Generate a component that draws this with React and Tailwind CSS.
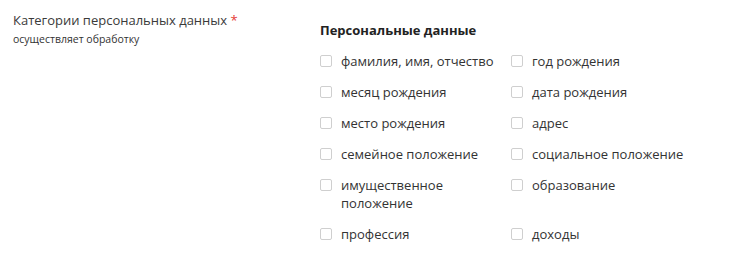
import React from "react";

const col1 = ["фамилия, имя, отчество", "месяц рождения", "место рождения", "семейное положение", "имущественное положение", "профессия"];
const col2 = ["год рождения", "дата рождения", "адрес", "социальное положение", "образование", "доходы"];

function Item({ label }) {
  return (
    <label className="flex items-start gap-[9px]">
      <span className="mt-[3px] h-[12px] w-[12px] shrink-0 rounded-[2px] border border-[#cfcfcf] bg-white"></span>
      <span className="leading-[18px]">{label}</span>
    </label>
  );
}

export default function App() {
  const items = [];
  for (let i = 0; i < col1.length; i++) {
    items.push(<Item key={"a" + i} label={col1[i]} />);
    items.push(<Item key={"b" + i} label={col2[i]} />);
  }
  return (
    <div className="h-[257px] w-[750px] bg-white text-[#333333]" style={{ fontFamily: '"Open Sans", sans-serif' }}>
      <div className="flex pt-[11px]">
        <div className="w-[320px] pl-[13px]">
          <div className="text-[13px] leading-[18px] text-[#3a3a3a]">
            Категории персональных данных <span className="text-[#e53935]">*</span>
          </div>
          <div className="mt-[3px] text-[10.5px] leading-[14px] text-[#333]">осуществляет обработку</div>
        </div>
        <div className="pt-[10px]">
          <div className="text-[13px] font-bold leading-[18px] text-[#222]">Персональные данные</div>
          <div className="mt-[13px] grid grid-cols-[191px_191px] gap-y-[13px] text-[13px]">
            {items}
          </div>
        </div>
      </div>
    </div>
  );
}
